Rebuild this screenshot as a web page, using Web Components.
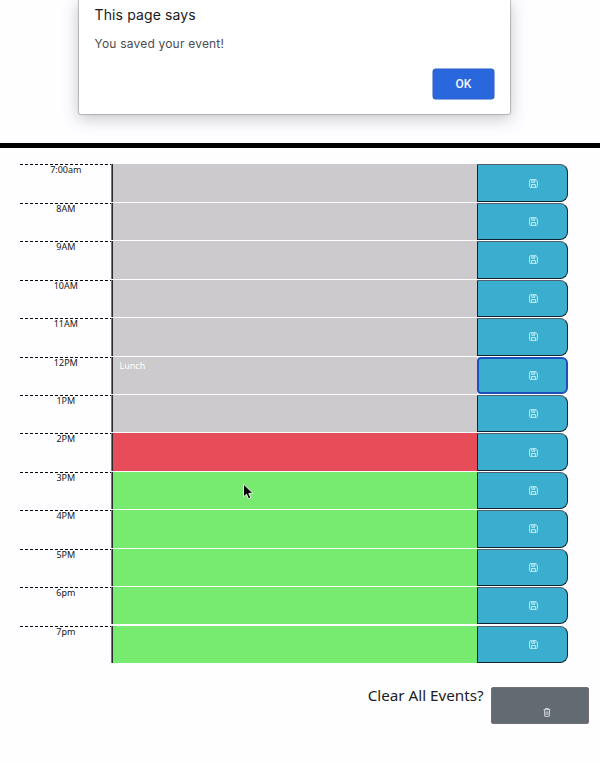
<!DOCTYPE html>
<html lang="en">
<head>
<meta charset="utf-8">
<title>Work Day Scheduler</title>
<style>
html,body{margin:0;height:763px;overflow:hidden;background:#fefdff}
</style>
</head>
<body>
<day-app></day-app>
<script>
const define = (name, html, setup) => customElements.define(name, class extends HTMLElement {
  connectedCallback() {
    if (this.shadowRoot) return;
    const t = document.createElement('template');
    t.innerHTML = html;
    this.attachShadow({mode: 'open'}).append(t.content.cloneNode(true));
    if (setup) setup(this, this.shadowRoot);
  }
});

define('alert-dialog', `
<style>
:host{display:flex;flex-direction:column;box-sizing:border-box;width:431px;height:114px;margin-left:79px;padding:6px 16px 15px 15.5px;background:#fff;border-radius:0 0 2px 2px;box-shadow:0 0 1px 1px rgba(90,90,95,.34),0 4px 16px 1px rgba(60,60,70,.28);font-family:Inter,sans-serif}
h1{margin:0;font-size:14px;line-height:18px;font-weight:400;letter-spacing:.12px;color:#18181c}
p{margin:11px 0 0;font-size:12px;line-height:18px;letter-spacing:.2px;color:#4b4b50}
button{margin:auto 0 0 auto;width:61px;height:30px;padding:0;border:0;border-radius:3px;background:#2a66dc;box-shadow:0 0 0 .5px #2459c4;color:#f2f8ff;font:500 12px/29px Roboto,sans-serif}
</style>
<h1><slot name="title"></slot></h1><p><slot></slot></p><button>OK</button>`);

define('save-button', `
<style>
:host{display:block;width:91px;height:37.4px}
button{display:flex;align-items:center;box-sizing:border-box;width:100%;height:100%;padding:0 0 0 50.5px;border:1px solid #10242c;border-top-color:#52606c;border-radius:0 8px 8px 0;background:#3badce}
:host([focused]) button{border:2px solid #1d50bd;border-radius:4px 6px 6px 4px;padding-left:49.5px}
svg{width:9px;height:9px;display:block}
</style>
<button aria-label="Save"><svg viewBox="0 0 9 9" fill="none" stroke="#c9f1f8" stroke-width=".95"><path d="M1.5.7H7L8.4 2v5.5q0 .9-.9.9h-6q-.9 0-.9-.9v-6q0-.8.9-.8Z"/><path d="M2.8.8v2.5h3V.8M2.6 8.2V5.5h3.8v2.7M4.7 1v1.4"/></svg></button>`);

define('time-block', `
<style>
:host{display:grid;grid-template-columns:91px 366px 91px;height:38.43px;--fill:#cccacd}
:host([when=present]){--fill:#e74d59}
:host([when=future]){--fill:#77eb70}
.hour{height:37px;box-sizing:border-box;padding-left:.6px;text-align:center;font:9px/12px "Noto Sans",sans-serif;color:#181818;background:repeating-linear-gradient(90deg,#080808 0 3px,#fefdff 3px 5px) 0 0/100% 1px no-repeat}
.event{box-sizing:border-box;height:37.4px;border-left:1px solid #77777a;box-shadow:inset 1px 0 #29292b;background:var(--fill);padding:3px 7.5px;font:9px/12px "Noto Sans",sans-serif;color:#fff}
</style>
<div class="hour"></div><div class="event"><slot></slot></div><save-button></save-button>`,
(host, root) => {
  root.querySelector('.hour').textContent = host.getAttribute('hour');
  if (host.hasAttribute('focused')) root.querySelector('save-button').setAttribute('focused', '');
});

define('clear-events', `
<style>
:host{display:flex;justify-content:flex-end;padding-right:11px;font-family:"Noto Sans",sans-serif}
span{font-size:15.2px;line-height:17px;color:#202024;margin-right:7.5px;white-space:nowrap}
button{display:block;box-sizing:border-box;width:98px;height:37px;padding:15px 0 0 51px;border:1px solid #737078;border-radius:2px;background:#626a72}
svg{display:block;width:8px;height:9px}
</style>
<span><slot></slot></span>
<button aria-label="Clear"><svg viewBox="0 0 8 9" fill="none" stroke="#e3e5e8" stroke-width=".85"><path d="M.6 1.6h6.8M2.6 1.4V.5h2.8v.9M1.4 2l.3 6.3h4.6L6.6 2M3.1 3.3v3.6M4.9 3.3v3.6"/></svg></button>`);

define('mouse-pointer', `
<style>:host{position:absolute;left:242px;top:483px}svg{display:block}</style>
<svg width="12" height="18" viewBox="0 0 12 18"><path d="M1.5 1v13l3-2.8 2 4.7 2.3-1-2-4.5h4.3Z" fill="#050505" stroke="#e9f9e8"/></svg>`);

define('day-app', `
<style>
:host{display:block;width:600px;height:763px;background:#fefdff}
header{height:143px;border-bottom:5px solid #000}
main{display:block;padding:16.45px 0 0 20px}
clear-events{margin-top:23px}
</style>
<header><alert-dialog><span slot="title">This page says</span>You saved your event!</alert-dialog></header>
<main></main>
<clear-events>Clear All Events?</clear-events>
<mouse-pointer></mouse-pointer>`,
(host, root) => {
  const main = root.querySelector('main');
  ['7:00am','8AM','9AM','10AM','11AM','12PM','1PM','2PM','3PM','4PM','5PM','6pm','7pm'].forEach((hour, i) => {
    const row = document.createElement('time-block');
    row.setAttribute('hour', hour);
    row.setAttribute('when', i < 7 ? 'past' : i === 7 ? 'present' : 'future');
    if (i === 5) { row.textContent = 'Lunch'; row.setAttribute('focused', ''); }
    main.append(row);
  });
});
</script>
</body>
</html>
